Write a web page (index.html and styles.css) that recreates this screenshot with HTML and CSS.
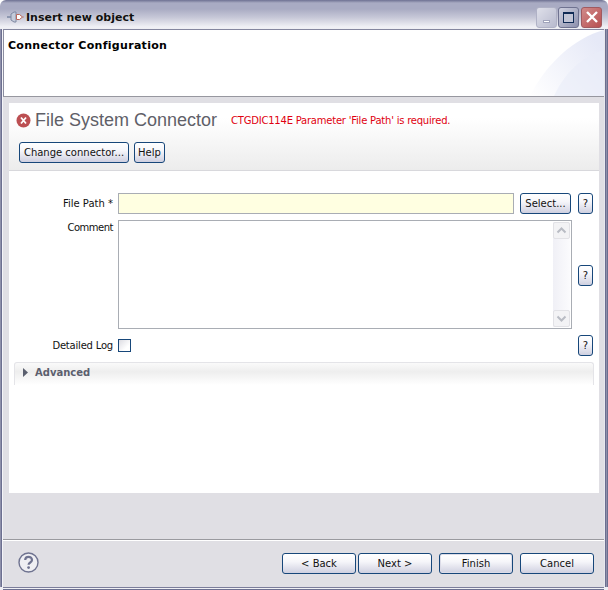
FILE: index.html
```html
<!DOCTYPE html>
<html lang="en">
<head>
<meta charset="utf-8">
<title>Insert new object</title>
<link rel="stylesheet" href="styles.css">
</head>
<body>
<div class="window">
  <div class="titlebar">
    <svg class="app-icon" width="18" height="14" viewBox="0 0 18 14">
      <path d="M0 7h4" stroke="#8d97b0" stroke-width="2"/>
      <path d="M4 4l3-2h2v10H7l-3-2z" fill="#c4cbda" stroke="#7f88a2"/>
      <path d="M9.500 4.500h3l3 2.500-3 2.500h-3z" fill="#fff" stroke="#b9665a"/>
      <path d="M15 7h2" stroke="#c08a80"/>
    </svg>
    <span class="title">Insert new object</span>
    <div class="win-buttons">
      <div class="win-btn win-min"><span class="min-bar"></span></div>
      <div class="win-btn win-max"><span class="max-box"></span></div>
      <div class="win-btn win-close">
        <svg width="14" height="14" viewBox="0 0 14 14"><path d="M2 2l10 10M12 2L2 12" stroke="#fff" stroke-width="2.4" fill="none"/></svg>
      </div>
    </div>
  </div>
  <div class="inner">
    <div class="banner">
      <div class="banner-title">Connector Configuration</div>
      <svg class="banner-art" width="74" height="66" viewBox="0 0 74 66">
        <defs>
          <linearGradient id="bg1" x1="0" y1="1" x2="1" y2="0.300">
            <stop offset="0" stop-color="#fff"/><stop offset="1" stop-color="#e6e9f7"/>
          </linearGradient>
        </defs>
        <path d="M0 66C16 34 44 8 74 0V66z" fill="url(#bg1)"/>
        <path d="M24 66C34 44 52 26 74 20V66z" fill="#e9ecf8" opacity=".6"/>
      </svg>
    </div>
    <div class="content">
      <div class="panel">
        <div class="panel-head">
          <div class="head-row">
            <svg class="err-icon" width="15" height="15" viewBox="0 0 15 15">
              <circle cx="7.500" cy="7.500" r="7" fill="#bc4f52"/>
              <path d="M5 4.500l5 6M10 4.500l-5 6" stroke="#fff" stroke-width="1.800"/>
            </svg>
            <span class="head-title">File System Connector</span>
            <span class="head-error">CTGDIC114E Parameter 'File Path' is required.</span>
          </div>
          <div class="head-buttons">
            <button class="btn btn-change">Change connector...</button>
            <button class="btn btn-help">Help</button>
          </div>
        </div>
        <div class="form">
          <label class="lbl lbl-path">File Path *</label>
          <div class="input-path"></div>
          <button class="btn btn-select">Select...</button>
          <button class="btn btn-q">?</button>

          <label class="lbl lbl-comment">Comment</label>
          <div class="textarea">
            <div class="scrollbar">
              <div class="sb-btn"><svg width="11" height="7" viewBox="0 0 11 7"><path d="M1.500 5.500l4-4 4 4" fill="none" stroke="#b9bcc4" stroke-width="2"/></svg></div>
              <div class="sb-btn"><svg width="11" height="7" viewBox="0 0 11 7"><path d="M1.500 1.500l4 4 4-4" fill="none" stroke="#b9bcc4" stroke-width="2"/></svg></div>
            </div>
          </div>
          <button class="btn btn-q btn-q-mid">?</button>

          <label class="lbl lbl-log">Detailed Log</label>
          <div class="log-cell"><span class="checkbox"></span></div>
          <button class="btn btn-q btn-q-log">?</button>
        </div>
        <div class="advanced">
          <svg class="tri" width="5" height="9" viewBox="0 0 5 9"><path d="M0 0l5 4.500L0 9z" fill="#5a5f6e"/></svg>
          <span class="adv-text">Advanced</span>
        </div>
      </div>
    </div>
    <div class="footer">
      <svg class="help-icon" width="21" height="21" viewBox="0 0 21 21">
        <circle cx="10.500" cy="10.500" r="9.500" fill="#efeff3" stroke="#6f7390" stroke-width="1.400"/>
        <path d="M7.200 8c0-4.300 6.800-4.300 6.800 0 0 2.600-3.400 2.400-3.400 4.800" fill="none" stroke="#6f7390" stroke-width="2.200"/>
        <circle cx="10.600" cy="15.600" r="1.400" fill="#6f7390"/>
      </svg>
      <div class="nav">
        <button class="btn btn-nav">&lt; Back</button>
        <button class="btn btn-nav btn-next">Next &gt;</button>
        <button class="btn btn-nav btn-finish">Finish</button>
        <button class="btn btn-nav">Cancel</button>
      </div>
    </div>
  </div>
</div>
</body>
</html>
```
FILE: styles.css
```css
* { box-sizing: border-box; }
html, body { margin: 0; padding: 0; }
body { width: 608px; height: 590px; overflow: hidden; background: #fff; font-family: "DejaVu Sans", sans-serif; font-size: 10px; color: #111; }
.window { width: 608px; height: 590px; display: flex; flex-direction: column; background: linear-gradient(#6e7192 0, #a9abc3 3px, #a9abc3 9px, #c9cad9 18px, #f1f1f6 27px, #eeeef3 29px); border-radius: 6px 6px 0 0; }
.titlebar { height: 29px; flex: none; display: flex; align-items: center; padding: 0 6px 0 7px; }
.app-icon { flex: none; margin-top: 4px; }
.title { margin-left: 1px; margin-top: 5px; font: bold 11px "DejaVu Sans", sans-serif; color: #111; text-shadow: 0 0 1px #ddd; }
.win-buttons { margin-left: auto; display: flex; gap: 1px; margin-top: 5px; }
.win-btn { width: 21px; height: 21px; border-radius: 3px; border: 1px solid #8b8da8; display: flex; align-items: center; justify-content: center; }
.win-min { background: linear-gradient(135deg, #dfe0ea, #b8bace); border-color: #b0b2c6; align-items: flex-end; }
.min-bar { width: 7px; height: 3px; margin-bottom: 4px; background: #fff; border: 1px solid #a0a3bb; }
.win-max { margin-right: 1px; background: linear-gradient(135deg, #cfd1e0, #8d90ad); border-color: #6f7290; }
.max-box { width: 11px; height: 11px; border: 1px solid #0f2a55; border-top-width: 2px; background: #c2c5d6; }
.win-close { background: linear-gradient(135deg, #d08a8a, #b84f50); border-color: #a05a60; }
.inner { flex: 1; margin: 0 4px 3px 3px; min-height: 0; display: flex; flex-direction: column; background: #e0dfe4; box-shadow: -1px 0 0 #f4f4f8, -2px 0 0 #6c6f90, -3px 0 0 #8e90aa, 1px 0 0 #e8e8ee, 2px 0 0 #6c6f90, 3px 0 0 #8e90aa, 4px 0 0 #6c6f90, 0 1px 0 #7b7d9a, 0 2px 0 #f0f0f4, 0 3px 0 #6c6f90; border-top: 1px solid #84869f; }
.banner { height: 67px; flex: none; background: #fff; border-left: 1px solid #8b8da0; border-bottom: 1px solid #97979f; display: flex; position: relative; padding: 8px 0 0 4px; }
.banner-title { font: bold 11px "DejaVu Sans", sans-serif; color: #000; line-height: 15px; letter-spacing: .3px; }
.banner-art { position: absolute; right: 0; bottom: 0; }
.content { flex: none; height: 442px; padding: 6px 5px 0 6px; }
.panel { background: #fff; height: 390px; display: flex; flex-direction: column; }
.panel-head { height: 68px; flex: none; padding: 7px 0 0 7px; background: linear-gradient(#fff 0, #fff 15px, #ececec 67px); border-bottom: 1px solid #d8d8dc; }
.head-row { display: flex; align-items: center; height: 20px; }
.err-icon { flex: none; }
.head-title { margin-left: 4px; font: 18px "Liberation Sans", sans-serif; color: #5f6068; }
.head-error { margin-left: 14px; margin-top: 1px; font: 10px "DejaVu Sans", sans-serif; letter-spacing: -.22px; color: #e00010; }
.head-buttons { display: flex; gap: 5px; margin: 12px 0 0 3px; }
.btn { font: 10px "DejaVu Sans", sans-serif; color: #111; height: 21px; padding: 0; border: 1px solid #17477a; border-radius: 3px; background: linear-gradient(#fff 0, #f6f6fa 40%, #cfd0e0 100%); white-space: nowrap; }
.btn-change { width: 110px; }
.btn-help { width: 31px; }
.form { flex: none; height: 191px; padding: 22px 6px 0 0; display: grid; grid-template-columns: 109px 396px 6px 51px 7px 15px; grid-template-rows: 21px 6px 109px 6px 21px; }
.lbl { text-align: right; font-size: 10px; letter-spacing: -.2px; line-height: 21px; padding-right: 5px; grid-column: 1; }
.lbl-path { grid-row: 1; letter-spacing: 0; }
.input-path { grid-column: 2; grid-row: 1; background: #ffffe1; border: 1px solid #a9adb4; }
.btn-select { grid-column: 4; grid-row: 1; }
.btn-q { grid-column: 6; grid-row: 1; width: 15px; }
.lbl-comment { grid-row: 3; line-height: 14px; padding-top: 1px; letter-spacing: -.5px; }
.textarea { grid-column: 2 / 5; grid-row: 3; margin-right: -1px; border: 1px solid #a9adb4; background: #fff; display: flex; justify-content: flex-end; }
.scrollbar { width: 17px; margin: 1px 1px 1px 0; background: linear-gradient(90deg, #f0f0f6, #fbfbfd); display: flex; flex-direction: column; justify-content: space-between; }
.sb-btn { height: 17px; display: flex; align-items: center; justify-content: center; background: #f3f3f5; border: 1px solid #e2e2e6; border-radius: 2px; }
.btn-q-mid { grid-row: 3; align-self: center; margin-top: 2px; }
.lbl-log { grid-row: 5; }
.log-cell { grid-column: 2; grid-row: 5; display: flex; align-items: center; }
.checkbox { width: 13px; height: 13px; border: 1px solid #17477a; background: linear-gradient(135deg, #dcdce2, #fff 70%); }
.btn-q-log { grid-row: 5; }
.advanced { flex: none; height: 23px; margin: 0 5px; padding: 0 0 3px 8px; display: flex; align-items: center; gap: 7px; border: 1px solid #e4e4e8; border-bottom: 0; border-radius: 3px 3px 0 0; background: linear-gradient(#fafafa, #eeeeee 40%, #fff 100%); }
.adv-text { font: bold 10px "DejaVu Sans", sans-serif; color: #5c5f6e; }
.footer { flex: 1; border-top: 1px solid #9a9a9f; box-shadow: inset 0 1px 0 #fff; display: flex; align-items: flex-start; padding: 12px 10px 0 15px; }
.help-icon { flex: none; }
.nav { margin-left: auto; display: flex; margin-top: 1px; }
.btn-nav { width: 74px; margin-left: 7px; }
.btn-next { margin-left: 2px; }
.btn-finish { box-shadow: inset 0 0 0 1px #dcdce8; }
```
